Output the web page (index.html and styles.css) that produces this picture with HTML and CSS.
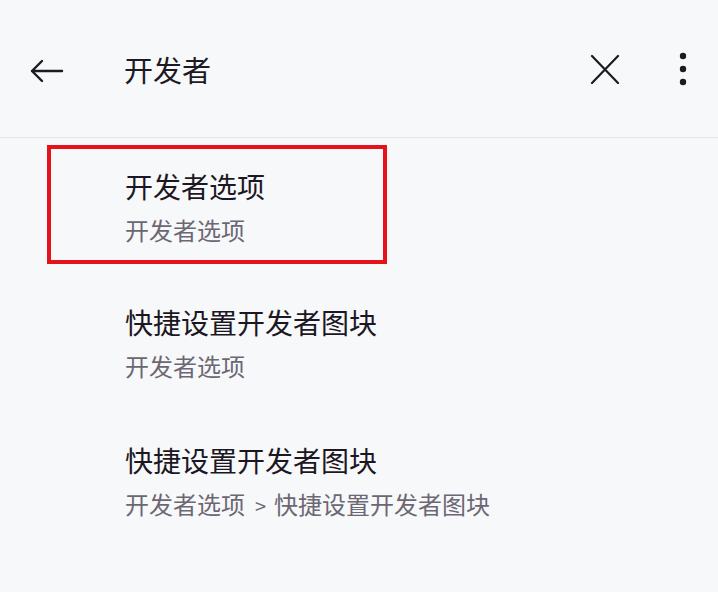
FILE: index.html
```html
<!DOCTYPE html>
<html lang="zh-CN">
<head>
<meta charset="utf-8">
<title>开发者</title>
<link rel="stylesheet" href="styles.css">
</head>
<body>
<div class="app">
  <header class="topbar">
    <svg class="icon-back" width="36" height="36" viewBox="0 0 36 36" aria-hidden="true">
      <path d="M34 18H4M14 8L4 18L14 28" fill="none" stroke="#1c1a22" stroke-width="2.4" stroke-linecap="round" stroke-linejoin="round"/>
    </svg>
    <h1 class="title">开发者</h1>
    <div class="spacer"></div>
    <svg class="icon-close" width="30" height="30" viewBox="0 0 30 30" aria-hidden="true">
      <path d="M2 2L28 29M28 2L2 29" fill="none" stroke="#1c1a22" stroke-width="2.2" stroke-linecap="round"/>
    </svg>
    <svg class="icon-more" width="12" height="36" viewBox="0 0 12 36" aria-hidden="true">
      <circle cx="6" cy="5" r="3.2" fill="#1c1a22"/>
      <circle cx="6" cy="18" r="3.2" fill="#1c1a22"/>
      <circle cx="6" cy="31" r="3.2" fill="#1c1a22"/>
    </svg>
  </header>
  <main class="list">
    <div class="item item-highlight">
      <div class="item-title">开发者选项</div>
      <div class="item-sub">开发者选项</div>
    </div>
    <div class="item">
      <div class="item-title">快捷设置开发者图块</div>
      <div class="item-sub">开发者选项</div>
    </div>
    <div class="item">
      <div class="item-title">快捷设置开发者图块</div>
      <div class="item-sub">开发者选项<span class="sep">&gt;</span>快捷设置开发者图块</div>
    </div>
  </main>
</div>
</body>
</html>
```
FILE: styles.css
```css
* { box-sizing: border-box; }
html, body {
  margin: 0;
  padding: 0;
  background: #f7f8fa;
}
body {
  font-family: "Noto Sans CJK SC", "Noto Sans", sans-serif;
  color: #1c1a22;
  width: 718px;
  height: 592px;
  overflow: hidden;
}
.topbar {
  height: 138px;
  display: flex;
  align-items: center;
  padding: 0 29px 0 28px;
  border-bottom: 1px solid #e5e6ea;
}
.icon-back { display: block; flex: none; margin-top: 4px; }
.title {
  margin: 0 0 0 60px;
  font-size: 29px;
  font-weight: 400;
  line-height: 40px;
  color: #1c1a22;
}
.spacer { flex: 1; }
.icon-close { display: block; flex: none; margin-right: 57px; }
.icon-more { display: block; flex: none; }
.list {
  display: flex;
  flex-direction: column;
}
.item {
  padding: 38px 0 18px 125px;
  display: flex;
  flex-direction: column;
}
.item-highlight {
  margin: 7px 0 0 47px;
  width: 340px;
  padding: 17px 0 12px 74px;
  border: 4px solid #e5121c;
}
.item-title {
  font-size: 28px;
  line-height: 40px;
  color: #1c1722;
  white-space: nowrap;
}
.item-sub {
  margin-top: 6px;
  font-size: 24px;
  line-height: 36px;
  color: #6c6773;
  white-space: nowrap;
}
.sep {
  display: inline-block;
  margin: 0 8px 0 10px;
  font-size: 20px;
}
```
